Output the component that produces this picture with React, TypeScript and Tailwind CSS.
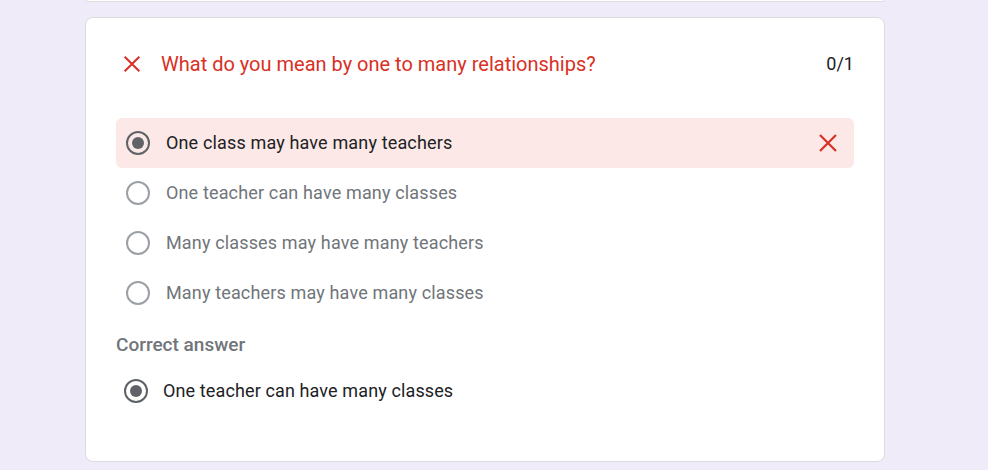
import React from 'react';

const options = [
  { label: 'One class may have many teachers', picked: true },
  { label: 'One teacher can have many classes', picked: false },
  { label: 'Many classes may have many teachers', picked: false },
  { label: 'Many teachers may have many classes', picked: false },
];

function Cross({ className }: { className?: string }) {
  return (
    <svg viewBox="0 0 24 24" className={className} fill="none" stroke="currentColor" strokeWidth="2.2">
      <path d="M4 4 L20 20 M20 4 L4 20" />
    </svg>
  );
}

function Radio({ on, muted }: { on: boolean; muted?: boolean }) {
  return (
    <span
      className={
        'flex h-[24px] w-[24px] shrink-0 items-center justify-center rounded-full border-[2px] ' +
        (muted ? 'border-[#9aa0a6]' : 'border-[#5f6368]')
      }
    >
      {on && <span className="h-[12px] w-[12px] rounded-full bg-[#5f6368]" />}
    </span>
  );
}

export default function App() {
  return (
    <div
      className="min-h-[470px] w-full bg-[#f0ebf8] px-[85px]"
      style={{ fontFamily: 'Roboto, "Liberation Sans", sans-serif' }}
    >
      {/* previous card, only its bottom edge shows */}
      <div className="ml-[1px] h-[2px] w-[798px] rounded-b-lg border-x border-b border-[#dadce0] bg-white" />

      <div className="mt-[15px] h-[445px] w-[800px] rounded-lg border border-[#dadce0] bg-white px-[30px] pt-[32px]">
        {/* question */}
        <div className="flex h-[28px] items-center">
          <Cross className="ml-[5px] h-[22px] w-[22px] text-[#d93025]" />
          <div className="ml-[18px] flex-1 text-[20px] leading-[28px] text-[#d93025]">
            What do you mean by one to many relationships?
          </div>
          <div className="text-[18px] leading-[28px] text-[#202124]">0/1</div>
        </div>

        {/* options */}
        <div className="mt-[40px]">
          {options.map((o) => (
            <div
              key={o.label}
              className={
                'flex h-[50px] items-center rounded-md pl-[10px] pr-[14px] ' + (o.picked ? 'bg-[#fce8e6]' : '')
              }
            >
              <Radio on={o.picked} muted={!o.picked} />
              <span
                className={
                  'ml-[16px] flex-1 text-[18px] leading-[24px] tracking-[0.15px] ' +
                  (o.picked ? 'text-[#202124]' : 'text-[#70757a]')
                }
              >
                {o.label}
              </span>
              {o.picked && <Cross className="h-[24px] w-[24px] text-[#d93025]" />}
            </div>
          ))}
        </div>

        <div className="mt-[15px] text-[19px] leading-[24px] font-medium text-[#70757a]">Correct answer</div>

        <div className="mt-[22px] flex h-[24px] items-center pl-[8px]">
          <Radio on />
          <span className="ml-[15px] text-[18px] leading-[24px] tracking-[0.12px] text-[#202124]">
            One teacher can have many classes
          </span>
        </div>
      </div>
    </div>
  );
}
